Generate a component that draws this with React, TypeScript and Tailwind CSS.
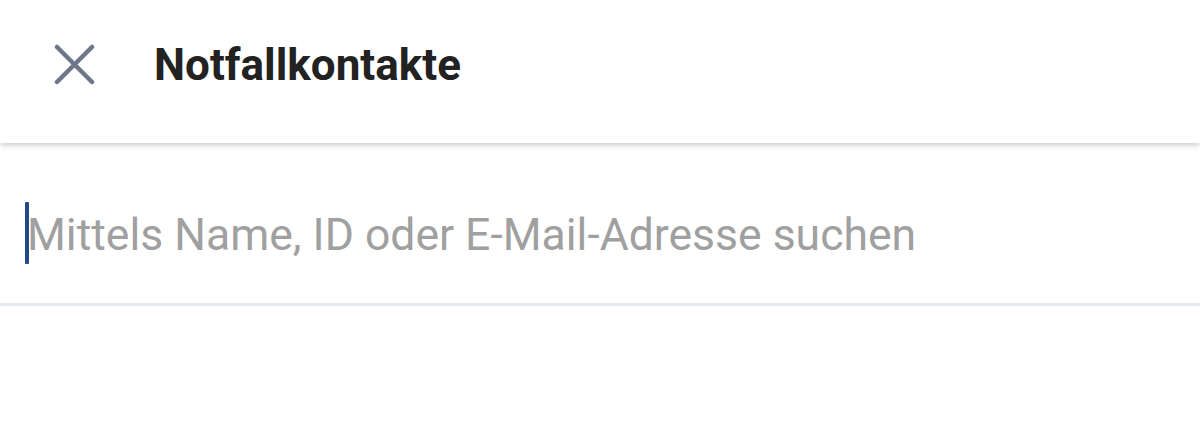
import React from "react";

export default function App() {
  return (
    <div className="w-[1200px] h-[441px] bg-white overflow-hidden" style={{ fontFamily: "Roboto, 'Noto Sans', sans-serif" }}>
      <header className="relative z-10 h-[143px] bg-white flex items-start pt-[44px] pl-[54px] shadow-[0_2px_6px_rgba(0,0,0,0.22)]">
        <div className="flex items-center h-[41px]">
          <svg width="41" height="41" viewBox="0 0 41 41" fill="none">
            <path d="M3 3 L38 38 M38 3 L3 38" stroke="#6f7689" strokeWidth="4.5" strokeLinecap="round" />
          </svg>
          <h1 className="ml-[59px] text-[44px] leading-[44px] font-bold text-[#222222]">Notfallkontakte</h1>
        </div>
      </header>
      <div className="h-[163px] border-b-[3px] border-[#e5eaf2] pt-[59px] pl-[25px]">
        <div className="flex items-start h-[62px]">
          <div className="w-[4px] h-[62px] bg-[#1f4a86] rounded-[1px]" />
          <span className="-ml-[2px] text-[44.5px] leading-[62px] text-[#a0a0a0] pt-[2px]">Mittels Name, ID oder E-Mail-Adresse suchen</span>
        </div>
      </div>
    </div>
  );
}
